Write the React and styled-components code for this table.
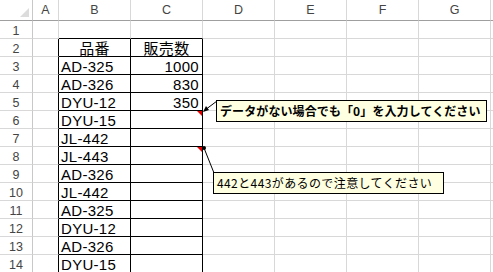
import React from 'react'
import styled, { createGlobalStyle } from 'styled-components'

const GlobalStyle = createGlobalStyle`
  html, body {
    margin: 0;
    padding: 0;
    background: #fff;
    overflow: hidden;
  }
  #root {
    position: relative;
    width: 493px;
    height: 272px;
    overflow: hidden;
  }
`;

const LETTERS = ['A', 'B', 'C', 'D', 'E', 'F', 'G'];

const ROWS = [
  null,
  { code: '品番', qty: '販売数', head: true },
  { code: 'AD-325', qty: '1000' },
  { code: 'AD-326', qty: '830' },
  { code: 'DYU-12', qty: '350' },
  { code: 'DYU-15', qty: '', note: true },
  { code: 'JL-442', qty: '' },
  { code: 'JL-443', qty: '', note: true },
  { code: 'AD-326', qty: '' },
  { code: 'JL-442', qty: '' },
  { code: 'AD-325', qty: '' },
  { code: 'DYU-12', qty: '' },
  { code: 'AD-326', qty: '' },
  { code: 'DYU-15', qty: '' },
];

const Sheet = styled.div`
  display: grid;
  grid-template-columns: 33px 26px 72px 72px 72px 72px 72px 72px 72px;
  grid-template-rows: 21px;
  grid-auto-rows: 18px;
  background: #fff;
`;

const Corner = styled.div`
  position: relative;
  border-right: 1px solid #c8c8c8;
  border-bottom: 1px solid #9f9f9f;
  &::after {
    content: '';
    position: absolute;
    right: 3px;
    bottom: 3px;
    width: 0;
    height: 0;
    border-left: 9px solid transparent;
    border-bottom: 9px solid #dcdcdc;
  }
`;

const ColHead = styled.div`
  border-right: 1px solid #d8d8d8;
  border-bottom: 1px solid #9f9f9f;
  font-family: "Liberation Sans", Arial, sans-serif;
  font-size: 12.5px;
  color: #444;
  text-align: center;
  line-height: 20px;
`;

const RowHead = styled.div`
  border-right: 1px solid #c8c8c8;
  border-bottom: 1px solid #d8d8d8;
  padding-top: 3px;
  font-family: "Liberation Sans", Arial, sans-serif;
  font-size: 12.5px;
  color: #444;
  text-align: center;
  line-height: 14px;
`;

const Cell = styled.div`
  position: relative;
  box-sizing: border-box;
  border-right: 1px solid ${p => (p.$rb ? '#000' : '#d8d8d8')};
  border-bottom: 1px solid ${p => (p.$bb ? '#000' : '#d8d8d8')};
  padding: 2px ${p => (p.$align === 'right' ? '3px' : '2px')} 0;
  font-family: "Liberation Sans", "Noto Sans CJK JP", sans-serif;
  font-size: 15px;
  line-height: 15px;
  letter-spacing: 0.3px;
  color: #000;
  white-space: nowrap;
  text-align: ${p => p.$align || 'left'};
`;

/* red comment marker in the top right corner of a cell */
const Marker = styled.span`
  position: absolute;
  top: 0;
  right: 0;
  width: 0;
  height: 0;
  border-left: 5px solid transparent;
  border-top: 5px solid #e00000;
`;

const Note = styled.div`
  position: absolute;
  left: ${p => p.$left}px;
  top: ${p => p.$top}px;
  width: ${p => p.$width}px;
  height: 22px;
  box-sizing: border-box;
  background: #ffffe1;
  border: 1px solid #000;
  padding: 0 3px;
  font-family: "Noto Sans CJK JP", sans-serif;
  font-size: 12px;
  font-weight: ${p => (p.$bold ? 700 : 400)};
  line-height: 20px;
  color: #000;
  white-space: nowrap;
  letter-spacing: ${p => (p.$bold ? '0.1px' : '0.4px')};
`;

const Leaders = styled.svg`
  position: absolute;
  left: 0;
  top: 0;
  pointer-events: none;
`;

function SheetRow({ n, data }) {
  const cells = LETTERS.map(L => {
    let rb = false;
    let bb = false;
    let text = '';
    let align = 'left';
    if (data) {
      if (L === 'A') rb = true;
      if (L === 'B' || L === 'C') {
        rb = true;
        bb = true;
      }
      if (L === 'B') {
        text = data.code;
        if (data.head) align = 'center';
      }
      if (L === 'C') {
        text = data.qty;
        align = data.head ? 'center' : 'right';
      }
    } else if (L === 'B' || L === 'C') {
      bb = true;
    }
    return (
      <Cell key={L} $rb={rb} $bb={bb} $align={align}>
        {text}
        {L === 'C' && data && data.note && <Marker />}
      </Cell>
    );
  });
  return (
    <>
      <RowHead>{n}</RowHead>
      {cells}
      <Cell />
    </>
  );
}

export default function App() {
  return (
    <>
      <GlobalStyle />
      <Sheet>
        <Corner />
        {LETTERS.map(L => (
          <ColHead key={L}>{L}</ColHead>
        ))}
        <ColHead />
        {ROWS.map((r, i) => (
          <SheetRow key={i} n={i + 1} data={r} />
        ))}
      </Sheet>

      <Leaders width="493" height="272" viewBox="0 0 493 272">
        <line x1="217" y1="101" x2="205" y2="110" stroke="#000" strokeWidth="1" />
        <polygon points="203,112 206,106 209,110" fill="#000" />
        <line x1="214" y1="173" x2="204" y2="148" stroke="#000" strokeWidth="1" />
        <circle cx="204" cy="148" r="2" fill="#000" />
      </Leaders>

      <Note $left={216} $top={100} $width={271} $bold>
        データがない場合でも「0」を入力してください
      </Note>
      <Note $left={213} $top={172} $width={231}>
        442と443があるので注意してください
      </Note>
    </>
  );
}
